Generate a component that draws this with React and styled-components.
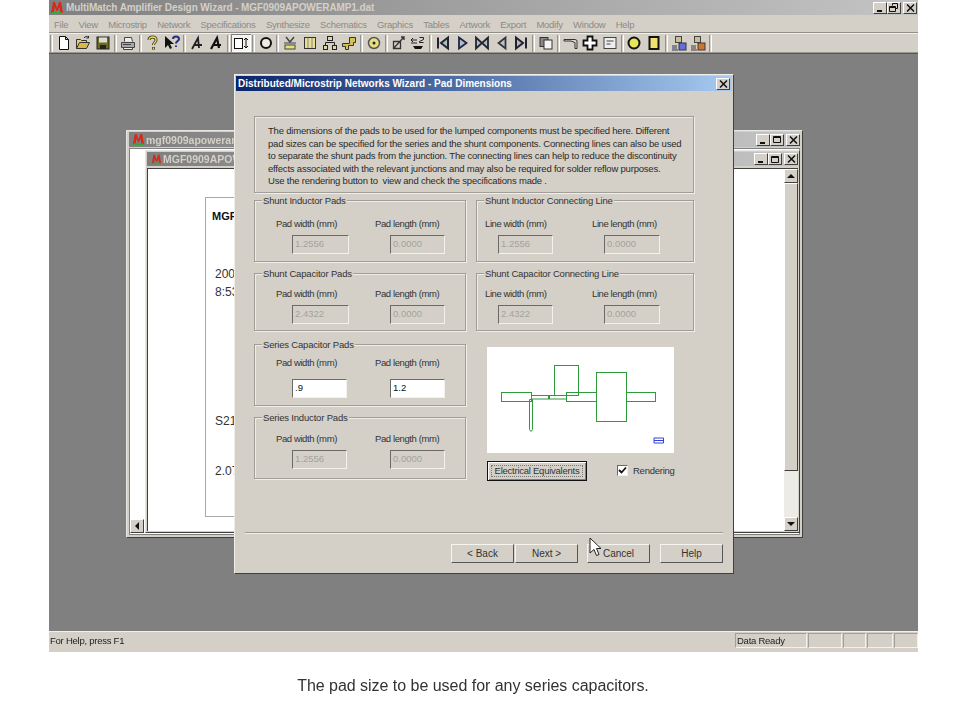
import React from "react";
import styled, { createGlobalStyle } from "styled-components";

const Global = createGlobalStyle`
  html, body { margin: 0; padding: 0; background: #fff; }
  body { font-family: "Liberation Sans", Arial, sans-serif; color: #222; }
  * { box-sizing: border-box; }
`;

const Page = styled.div`
  position: relative;
  width: 960px;
  height: 720px;
  overflow: hidden;
  padding-left: 49px;
  filter: blur(0.3px);
`;

const AppFrame = styled.div`
  width: 869px;
  height: 652px;
  display: flex;
  flex-direction: column;
  background: #d4d0c8;
`;

const TitleBar = styled.div`
  height: ${(p) => p.$h || 15}px;
  flex: none;
  display: flex;
  align-items: center;
  gap: ${(p) => p.$gap || 1}px;
  padding: 0 ${(p) => p.$pr || 0}px 0 ${(p) => p.$pl || 3}px;
  background: ${(p) =>
    p.$active
      ? "linear-gradient(90deg, #0a246a, #a6caf0)"
      : "linear-gradient(90deg, #808080, #c4c4c4)"};
  color: ${(p) => (p.$active ? "#fff" : "#d4d0c8")};
  font-size: ${(p) => p.$fs || 10.5}px;
  font-weight: bold;
  white-space: nowrap;
  overflow: hidden;
`;

const TitleText = styled.span`
  flex: 1;
  letter-spacing: ${(p) => p.$ls || 0}px;
  overflow: hidden;
`;

const CaptionButtons = styled.div`
  display: flex;
  flex: none;
`;

const CaptionBtn = styled.div`
  width: 14px;
  height: 12px;
  margin-left: ${(p) => p.$ml || 0}px;
  background: #d4d0c8;
  border: 1px solid;
  border-color: #fff #404040 #404040 #fff;
  display: flex;
  align-items: center;
  justify-content: center;
  svg { display: block; }
`;

const MenuBar = styled.div`
  height: 18px;
  flex: none;
  display: flex;
  align-items: center;
  padding: 1px 0 0 5px;
  gap: 10.25px;
  font-size: 9.5px;
  letter-spacing: -0.25px;
  color: #8b8a86;
  border-bottom: 1px solid #908e88;
`;

const ToolBar = styled.div`
  height: 20px;
  flex: none;
  display: flex;
  align-items: center;
  border-top: 1px solid #f2f0ea;
  border-bottom: 1px solid #9a9890;
`;

const Grip = styled.div`
  height: 17px;
  border-left: 1px solid #94928c;
  border-right: 1px solid #fff;
  width: 3px;
  flex: none;
  margin: ${(p) => (p.$end ? "0 0 0 1px" : "0 1px")};
`;

const ToolBtn = styled.div`
  width: 19.65px;
  height: 18px;
  flex: none;
  display: flex;
  align-items: center;
  justify-content: center;
  background: ${(p) => (p.$pressed ? "#f4f3ef" : "transparent")};
  box-shadow: ${(p) =>
    p.$pressed ? "inset 1px 1px 0 #808080, inset -1px -1px 0 #fff" : "none"};
`;

const Desktop = styled.div`
  position: relative;
  flex: 1;
  background: #808080;
  border-top: 1px solid #555;
`;

const Window = styled.div`
  position: absolute;
  display: flex;
  flex-direction: column;
  background: #d4d0c8;
  border: 1px solid;
  border-color: #e8e6e0 #404040 #404040 #e8e6e0;
`;

const BackWindow = styled(Window)`
  left: 77px;
  top: 76px;
  width: 677px;
  height: 408px;
  padding: 1px 2px 2px;
`;

const BackClient = styled.div`
  flex: 1;
  background: #fff;
  margin-top: 1px;
  border: 1px solid #808080;
  display: flex;
  align-items: flex-end;
  padding-bottom: 1px;
`;

const ChildWindow = styled(Window)`
  left: 96px;
  top: 96px;
  width: 655px;
  height: 383px;
  padding: 1px;
`;

const ChildClient = styled.div`
  flex: 1;
  display: flex;
  background: #fff;
  margin-top: 2px;
  border: solid #404040;
  border-width: 1px 0 0 1px;
  min-height: 0;
`;

const DocArea = styled.div`
  flex: 1;
  padding: 28px 0 0 57px;
`;

const Paper = styled.div`
  width: 500px;
  height: 320px;
  border: 1px solid #a8a8a8;
  padding: 11px 0 0 6px;
  font-size: 12px;
  color: #333;
`;

const PaperLine = styled.div`
  margin-top: ${(p) => p.$mt || 0}px;
  margin-left: ${(p) => p.$ml ?? 3}px;
  font-weight: ${(p) => (p.$bold ? "bold" : "normal")};
  font-size: ${(p) => (p.$bold ? 11 : 12)}px;
  line-height: 14px;
  color: ${(p) => (p.$bold ? "#111" : "#333")};
`;

const ScrollV = styled.div`
  width: 14px;
  flex: none;
  display: flex;
  flex-direction: column;
  background: #ecebe6;
`;

const ScrollBtn = styled.div`
  width: 14px;
  height: 14px;
  flex: none;
  background: #d4d0c8;
  border: 1px solid;
  border-color: #fff #404040 #404040 #fff;
  display: flex;
  align-items: center;
  justify-content: center;
`;

const ScrollThumb = styled(ScrollBtn)`
  height: 288px;
`;

const ScrollSpace = styled.div`
  flex: 1;
`;

const Dialog = styled.div`
  position: absolute;
  left: 185px;
  top: 20px;
  width: 500px;
  height: 500px;
  background: #d4d0c8;
  border: 1px solid;
  border-color: #efede8 #404040 #404040 #efede8;
  padding: 1px;
  display: flex;
  flex-direction: column;
`;

const DialogBody = styled.div`
  display: grid;
  grid-template-columns: 212px 218px;
  column-gap: 10px;
  padding: 25px 0 0 18px;
`;

const Column = styled.div`
  display: flex;
  flex-direction: column;
`;

const InfoBox = styled.div`
  grid-column: 1 / 3;
  height: 77px;
  margin-bottom: 7px;
  padding: 8px 0 0 13px;
  border: 1px solid #a09e98;
  box-shadow: 1px 1px 0 #f0eee8, inset 1px 1px 0 #eeece6;
  font-size: 9.5px;
  letter-spacing: -0.2px;
  line-height: 12.5px;
  white-space: nowrap;
  color: #2a2a2a;
`;

const Group = styled.div`
  position: relative;
  height: ${(p) => p.$h}px;
  margin-bottom: ${(p) => p.$mb || 0}px;
  padding-top: ${(p) => p.$pt}px;
  padding-left: ${(p) => p.$pl}px;
  border: 1px solid #a09e98;
  box-shadow: 1px 1px 0 #f0eee8, inset 1px 1px 0 #eeece6;
  display: grid;
  grid-template-columns: ${(p) => p.$col}px 1fr;
  align-content: start;
`;

const Legend = styled.div`
  position: absolute;
  left: 7px;
  top: -6px;
  padding: 0 1px;
  background: #d4d0c8;
  font-size: 9.5px;
  letter-spacing: -0.18px;
  line-height: 12px;
  white-space: nowrap;
  color: #333;
`;

const Field = styled.div`
  display: flex;
  flex-direction: column;
  align-items: flex-start;
  gap: ${(p) => p.$gap}px;
`;

const FieldLabel = styled.div`
  font-size: 9.5px;
  letter-spacing: -0.4px;
  line-height: 12px;
  white-space: nowrap;
  color: #333;
`;

const Input = styled.div`
  width: ${(p) => p.$w || 57}px;
  height: 19px;
  margin-left: ${(p) => p.$indent}px;
  padding-left: 2px;
  font-size: 9.5px;
  line-height: 16px;
  background: ${(p) => (p.$on ? "#fff" : "#d4d0c8")};
  color: ${(p) => (p.$on ? "#111" : "#a4a29c")};
  border: 1px solid;
  border-color: #6a6a66 #f4f2ec #f4f2ec #6a6a66;
`;

const PreviewCol = styled.div`
  grid-column: 2;
  padding: 3px 0 0 11px;
  display: flex;
  flex-direction: column;
`;

const Preview = styled.div`
  width: 187px;
  height: 106px;
  background: #fff;
  svg { display: block; }
`;

const PreviewFoot = styled.div`
  display: flex;
  align-items: center;
  margin-top: 8px;
`;

const DefaultButton = styled.div`
  width: 100px;
  height: 20px;
  background: #d4d0c8;
  border: 1px solid #111;
  box-shadow: inset 1px 1px 0 #fff, inset -1px -1px 0 #808080;
  font-size: 9.5px;
  letter-spacing: -0.25px;
  line-height: 17px;
  text-align: center;
  color: #333;
  position: relative;
  &::after {
    content: "";
    position: absolute;
    inset: 3px;
    border: 1px dotted #777;
  }
`;

const Rendering = styled.div`
  display: flex;
  align-items: center;
  gap: 5px;
  margin: -2px 0 0 30px;
  font-size: 9.5px;
  letter-spacing: -0.25px;
  color: #333;
`;

const CheckBox = styled.div`
  width: 11px;
  height: 11px;
  background: #fff;
  border: 1px solid;
  border-color: #666 #eee #eee #666;
  display: flex;
  align-items: center;
  justify-content: center;
`;

const Divider = styled.div`
  height: 2px;
  margin: 51px 9px 0 9px;
  border-top: 1px solid #9a9890;
  border-bottom: 1px solid #f2f0ea;
`;

const ButtonRow = styled.div`
  display: flex;
  padding: 10px 0 0 215px;
`;

const WizButton = styled.div`
  width: ${(p) => p.$w || 63}px;
  height: 19px;
  margin-left: ${(p) => p.$ml || 0}px;
  background: #d4d0c8;
  border: 1px solid;
  border-color: #f6f4ee #555 #555 #f6f4ee;
  font-size: 10px;
  line-height: 17px;
  text-align: center;
  color: #333;
`;

const StatusBar = styled.div`
  height: 21px;
  flex: none;
  display: flex;
  align-items: flex-start;
  padding-top: 1px;
  font-size: 9.5px;
  letter-spacing: -0.25px;
  color: #222;
  border-top: 1px solid #f2f0ea;
`;

const StatusText = styled.div`
  flex: 1;
  padding: 2px 0 0 1px;
  line-height: 12px;
`;

const StatusPanel = styled.div`
  width: ${(p) => p.$w}px;
  height: 15px;
  margin-left: ${(p) => p.$ml || 0}px;
  padding-left: 1px;
  line-height: 13px;
  border: 1px solid;
  border-color: #a09e98 #f4f2ec #f4f2ec #a09e98;
`;

const Caption = styled.div`
  margin-top: 26px;
  margin-left: -1px;
  width: 850px;
  text-align: center;
  font-size: 16px;
  line-height: 16px;
  color: #333;
  letter-spacing: -0.03px;
`;

const Cursor = styled.svg`
  position: absolute;
  left: 589px;
  top: 537px;
`;

const Logo = ({ size = 12 }) => (
  <svg width={size} height={size} viewBox="0 0 14 14" style={{ flex: "none" }}>
    <path d="M1 12 L3 1 L5 1 L7 7 L9 1 L11 1 L13 12 L10 12 L9.4 6 L7.6 10 L6.4 10 L4.6 6 L4 12 Z" fill="#d62a18" />
    <rect x="2" y="11" width="10" height="2" fill="#35a83a" />
  </svg>
);

const Glyph = ({ kind }) => {
  if (kind === "min") return <svg width="8" height="8"><rect x="1" y="6" width="5" height="2" fill="#111" /></svg>;
  if (kind === "max") return <svg width="10" height="9"><path d="M1.500 1.500h7v6h-7zM1 2.500h8" fill="none" stroke="#111" /></svg>;
  if (kind === "restore")
    return (
      <svg width="10" height="9">
        <path d="M3.500 2.500V.5h5v5H6.500M.5 3.500h6v5h-6zM.5 4.500h6" fill="none" stroke="#111" strokeWidth="1" />
      </svg>
    );
  return <svg width="9" height="8"><path d="M1 .5L8 7.500M8 .5L1 7.500" stroke="#111" strokeWidth="1.500" /></svg>;
};

const Caps = ({ restore }) => (
  <CaptionButtons>
    <CaptionBtn><Glyph kind="min" /></CaptionBtn>
    <CaptionBtn><Glyph kind={restore ? "restore" : "max"} /></CaptionBtn>
    <CaptionBtn $ml={2}><Glyph kind="close" /></CaptionBtn>
  </CaptionButtons>
);

const toolIcons = {
  new: <path d="M3.500 1.500h6l3 3v10h-9zM9.500 1.500v3h3" fill="#fff" stroke="#111" />,
  open: (
    <>
      <path d="M1.500 13.500v-9h4l1 1h5v2" fill="#e8d070" stroke="#333" />
      <path d="M1.500 13.500l3-6h10l-3 6z" fill="#d8b850" stroke="#333" />
      <path d="M9 3c1.500-2 3-2 4.500-.5M13.500 1v2h-2" fill="none" stroke="#222" />
    </>
  ),
  save: (
    <>
      <rect x="2" y="2" width="12" height="12" fill="#6c6c20" stroke="#222" />
      <rect x="4" y="2.500" width="8" height="5" fill="#dedcd2" />
      <rect x="5" y="10" width="6" height="4" fill="#222" />
    </>
  ),
  print: (
    <>
      <path d="M4.500 6.500v-4h7l1 4" fill="#eee" stroke="#444" />
      <path d="M1.500 7.500h13v5h-13z" fill="#a8a8a8" stroke="#444" />
      <path d="M3.500 12.500h9v2h-9z" fill="#eee" stroke="#444" />
      <path d="M3 9.500h8" stroke="#444" />
    </>
  ),
  help: (
    <>
      <path d="M5 5c0-4 7-4 7 0 0 2.500-2.500 2.500-2.500 5M9.500 14.500v-2.500" fill="none" stroke="#4a4210" strokeWidth="3" />
      <path d="M5 5c0-4 7-4 7 0 0 2.500-2.500 2.500-2.500 5M9.500 14v-1.500" fill="none" stroke="#e6d860" strokeWidth="1.300" />
    </>
  ),
  what: (
    <>
      <path d="M1 1v12l3-3 2 4 2-1-2-4h4z" fill="#111" />
      <path d="M9 4c0-3.500 6-3.500 6 0 0 2-3 2-3 4.500M12 12v-1.500" fill="none" stroke="#27307c" strokeWidth="2" />
    </>
  ),
  a1: <path d="M3 14L9 3l1 10M5 10h8" fill="none" stroke="#222" strokeWidth="1.800" />,
  a2: <path d="M3 14L9 3l2 10M5 10h8" fill="none" stroke="#111" strokeWidth="2.200" />,
  dim: (
    <>
      <rect x="1.500" y="3.500" width="8" height="10" fill="#fff" stroke="#111" />
      <path d="M13 3v10M11 5l2-2 2 2M11 11l2 2 2-2" fill="none" stroke="#111" />
    </>
  ),
  ring: <circle cx="8" cy="8" r="5" fill="#eeece0" stroke="#111" strokeWidth="2" />,
  cap: (
    <>
      <path d="M4 2l4 5 4-5" fill="none" stroke="#444" strokeWidth="1.500" />
      <path d="M2 8h12" stroke="#444" />
      <rect x="3" y="10" width="10" height="4" fill="#e8e070" stroke="#444" />
    </>
  ),
  bars: (
    <>
      <rect x="2.500" y="2.500" width="11" height="11" fill="#e8e090" stroke="#333" />
      <path d="M6 3v10M10 3v10" stroke="#888" />
    </>
  ),
  tree: (
    <>
      <rect x="5.500" y="1.500" width="5" height="4" fill="#d8d8a0" stroke="#222" />
      <rect x="1.500" y="10.500" width="4" height="4" fill="#d8d8a0" stroke="#222" />
      <rect x="10.500" y="10.500" width="4" height="4" fill="#d8d8a0" stroke="#222" />
      <path d="M3.500 10.500v-3h9v3" fill="none" stroke="#222" />
    </>
  ),
  bend: <path d="M1.500 8.500h7v-6h6v5h-2v3h-5v4h-3v-3h-3z" fill="#d8c050" stroke="#333" />,
  target: (
    <>
      <circle cx="8" cy="8" r="5.500" fill="#e8e080" stroke="#555" strokeWidth="1.500" />
      <circle cx="8" cy="8" r="1.500" fill="#222" />
    </>
  ),
  diag: <path d="M3.500 6.500h7v7h-7zM3 14L14 2M11 2h3v3" fill="none" stroke="#333" strokeWidth="1.300" />,
  swap: (
    <>
      <path d="M1 5h6M1 8h6M3 3l-2 2 2 2" fill="none" stroke="#222" />
      <path d="M3 11h10l-2 3H5z" fill="#111" />
      <path d="M9.500 2.500h4v2l-4 2v1h4" fill="none" stroke="#222" />
    </>
  ),
  first: <path d="M3 2.500v11M13 2.500v11L6 8z" fill="#a8c0b8" stroke="#223" strokeWidth="2" />,
  play: <path d="M5 2.500v11L12.500 8z" fill="#a8c0c8" stroke="#224" strokeWidth="1.800" />,
  both: <path d="M2 2.500v11L8 8zM14 2.500v11L8 8z" fill="#a8c0b8" stroke="#223" strokeWidth="1.800" />,
  back: <path d="M11.500 2.500v11L4.500 8z" fill="#b8c4bc" stroke="#334" strokeWidth="1.800" />,
  last: <path d="M13 2.500v11M3 2.500v11L10 8z" fill="#b8b8b8" stroke="#223" strokeWidth="2" />,
  copy: (
    <>
      <rect x="2" y="2.500" width="8" height="9" fill="#888" stroke="#333" />
      <rect x="6" y="5" width="8" height="9" fill="#f4f4f4" stroke="#333" />
    </>
  ),
  probe: <path d="M1 4.500h11l2 1v8h-2v-6l-4-1.500H1z" fill="#e0e0d0" stroke="#333" />,
  cross: <path d="M5.500 1.500h5v4h4v5h-4v4h-5v-4h-4v-5h4z" fill="#fff" stroke="#111" strokeWidth="1.800" />,
  note: (
    <>
      <rect x="2" y="2.500" width="12" height="11" fill="#eee" stroke="#444" />
      <path d="M4.500 6h7M4.500 9h4" stroke="#444" />
    </>
  ),
  disc: <circle cx="8" cy="8" r="5.500" fill="#e6e65a" stroke="#111" strokeWidth="2" />,
  pad: <rect x="3.500" y="2" width="9" height="12" fill="#f0e070" stroke="#111" strokeWidth="2" />,
  netA: (
    <>
      <rect x="4.500" y="1.500" width="6" height="6" fill="#c8c090" stroke="#444" />
      <path d="M1 11h5M1 13h5M1 15h6" stroke="#335" />
      <rect x="8" y="8" width="7" height="7" fill="#6070d8" stroke="#334" />
    </>
  ),
  netB: (
    <>
      <rect x="4.500" y="1.500" width="6" height="6" fill="#c8c090" stroke="#444" />
      <path d="M1 11h5M1 13h5M1 15h6" stroke="#533" />
      <rect x="8" y="8" width="7" height="7" fill="#c87830" stroke="#433" />
    </>
  ),
};

const toolGroups = [
  ["new", "open", "save"],
  ["print"],
  ["help", "what"],
  ["a1", "a2"],
  ["dim"],
  ["ring"],
  ["cap", "bars", "tree", "bend"],
  ["target"],
  ["diag", "swap"],
  ["first", "play", "both", "back", "last"],
  ["copy"],
  ["probe", "cross", "note"],
  ["disc", "pad"],
  ["netA", "netB"],
];

const menus = [
  "File", "View", "Microstrip", "Network", "Specifications", "Synthesize", "Schematics",
  "Graphics", "Tables", "Artwork", "Export", "Modify", "Window", "Help",
];

const Arrow = ({ dir }) => {
  const points = { up: "1,5 9,5 5,1", down: "1,1 9,1 5,5" };
  if (dir === "left") return <svg width="6" height="10"><polygon points="5,1 5,9 1,5" fill="#111" /></svg>;
  return <svg width="10" height="6"><polygon points={points[dir]} fill="#111" /></svg>;
};

const PadGroup = ({ title, h, mb, pt, pl, col, gap, a, b, labels, on, indentA, indentB, wA, wB }) => (
  <Group $h={h} $mb={mb} $pt={pt} $pl={pl} $col={col}>
    <Legend>{title}</Legend>
    <Field $gap={gap}>
      <FieldLabel>{labels[0]}</FieldLabel>
      <Input $indent={indentA} $on={on} $w={wA}>{a}</Input>
    </Field>
    <Field $gap={gap}>
      <FieldLabel>{labels[1]}</FieldLabel>
      <Input $indent={indentB} $on={on} $w={wB}>{b}</Input>
    </Field>
  </Group>
);

const padLabels = ["Pad width (mm)", "Pad length (mm)"];
const lineLabels = ["Line width (mm)", "Line length (mm)"];

const Layout = () => (
  <svg width="187" height="106" viewBox="0 0 187 106">
    <g fill="none" stroke="#2f9a3c" strokeWidth="1">
      <rect x="14.500" y="45.500" width="30" height="9" />
      <rect x="44.500" y="48.500" width="17" height="3.500" />
      <rect x="62.500" y="48.500" width="17" height="3.500" />
      <path d="M42.500 52.500h3v30l-1.500 2-1.500-2z" />
      <rect x="67.500" y="18.500" width="24" height="30" />
      <rect x="79.500" y="45.500" width="30" height="9" />
      <rect x="109.500" y="25.500" width="30" height="49" />
      <rect x="139.500" y="45.500" width="29" height="9" />
    </g>
    <path d="M167 91h9.500v5H167zM167 93.500h9.500" fill="none" stroke="#3340d8" />
  </svg>
);

export default function App() {
  return (
    <Page>
      <Global />
      <AppFrame>
        <TitleBar $gap={2} $pl={1} $fs={10} $pr={1}>
          <Logo size={14} />
          <TitleText $ls={-0.09}>MultiMatch Amplifier Design Wizard - MGF0909APOWERAMP1.dat</TitleText>
          <Caps restore />
        </TitleBar>
        <MenuBar>
          {menus.map((m) => (
            <span key={m}>{m}</span>
          ))}
        </MenuBar>
        <ToolBar>
          <Grip />
          {toolGroups.map((g, i) => (
            <React.Fragment key={g[0]}>
              {i > 0 && <Grip />}
              {g.map((k) => (
                <ToolBtn key={k} $pressed={k === "dim"}>
                  <svg width="16" height="16" viewBox="0 0 16 16">{toolIcons[k]}</svg>
                </ToolBtn>
              ))}
            </React.Fragment>
          ))}
          <Grip $end />
        </ToolBar>
        <Desktop>
          <BackWindow>
            <TitleBar>
              <Logo size={13} />
              <TitleText>mgf0909apoweramp1</TitleText>
              <Caps />
            </TitleBar>
            <BackClient>
              <ScrollBtn><Arrow dir="left" /></ScrollBtn>
            </BackClient>
          </BackWindow>
          <ChildWindow>
            <TitleBar $h={14} $pl={4}>
              <Logo size={11} />
              <TitleText>MGF0909APOWERAMP1</TitleText>
              <Caps />
            </TitleBar>
            <ChildClient>
              <DocArea>
                <Paper>
                  <PaperLine $bold $ml={0}>MGF0909A</PaperLine>
                  <PaperLine $mt={44}>2003</PaperLine>
                  <PaperLine $mt={4}>8:53</PaperLine>
                  <PaperLine $mt={115}>S21</PaperLine>
                  <PaperLine $mt={36}>2.07</PaperLine>
                </Paper>
              </DocArea>
              <ScrollV>
                <ScrollBtn><Arrow dir="up" /></ScrollBtn>
                <ScrollThumb />
                <ScrollSpace />
                <ScrollBtn><Arrow dir="down" /></ScrollBtn>
              </ScrollV>
            </ChildClient>
          </ChildWindow>
          <Dialog>
            <TitleBar $active $h={15} $pl={2} $fs={10} $pr={2}>
              <TitleText>Distributed/Microstrip Networks Wizard - Pad Dimensions</TitleText>
              <CaptionBtn><Glyph kind="close" /></CaptionBtn>
            </TitleBar>
            <DialogBody>
              <InfoBox>
                The dimensions of the pads to be used for the lumped components must be specified here. Different
                <br />
                pad sizes can be specified for the series and the shunt components. Connecting lines can also be used
                <br />
                to separate the shunt pads from the junction. The connecting lines can help to reduce the discontinuity
                <br />
                effects associated with the relevant junctions and may also be required for solder reflow purposes.
                <br />
                Use the rendering button to &nbsp;view and check the specifications made .
              </InfoBox>
              <Column>
                <PadGroup title="Shunt Inductor Pads" h={62} mb={11} pt={17} pl={21} col={99} gap={5} labels={padLabels} a="1.2556" b="0.0000" indentA={16} indentB={15} wB={55} />
                <PadGroup title="Shunt Capacitor Pads" h={58} mb={13} pt={14} pl={21} col={99} gap={5} labels={padLabels} a="2.4322" b="0.0000" indentA={16} indentB={15} wB={55} />
                <PadGroup title="Series Capacitor Pads" h={62} mb={11} pt={12} pl={21} col={99} gap={10} labels={padLabels} a=".9" b="1.2" on indentA={16} indentB={15} wA={55} wB={55} />
                <PadGroup title="Series Inductor Pads" h={62} pt={15} pl={21} col={99} gap={5} labels={padLabels} a="1.2556" b="0.0000" indentA={16} indentB={15} wA={55} wB={55} />
              </Column>
              <Column>
                <PadGroup title="Shunt Inductor Connecting Line" h={62} mb={11} pt={17} pl={8} col={107} gap={5} labels={lineLabels} a="1.2556" b="0.0000" indentA={13} indentB={12} wA={55} wB={56} />
                <PadGroup title="Shunt Capacitor Connecting Line" h={58} mb={13} pt={14} pl={8} col={107} gap={5} labels={lineLabels} a="2.4322" b="0.0000" indentA={13} indentB={12} wA={55} wB={56} />
                <PreviewCol>
                  <Preview><Layout /></Preview>
                  <PreviewFoot>
                    <DefaultButton>Electrical Equivalents</DefaultButton>
                    <Rendering>
                      <CheckBox>
                        <svg width="9" height="9"><path d="M1 4l2.500 2.500L8 1.500" fill="none" stroke="#111" strokeWidth="1.800" /></svg>
                      </CheckBox>
                      Rendering
                    </Rendering>
                  </PreviewFoot>
                </PreviewCol>
              </Column>
            </DialogBody>
            <Divider />
            <ButtonRow>
              <WizButton $w={63}>&lt; Back</WizButton>
              <WizButton $w={63} $ml={1}>Next &gt;</WizButton>
              <WizButton $w={63} $ml={9}>Cancel</WizButton>
              <WizButton $w={63} $ml={10}>Help</WizButton>
            </ButtonRow>
          </Dialog>
        </Desktop>
        <StatusBar>
          <StatusText>For Help, press F1</StatusText>
          <StatusPanel $w={72}>Data Ready</StatusPanel>
          <StatusPanel $w={34} $ml={1} />
          <StatusPanel $w={23} $ml={1} />
          <StatusPanel $w={26} $ml={1} />
          <StatusPanel $w={24} $ml={1} />
        </StatusBar>
      </AppFrame>
      <Caption>The pad size to be used for any series capacitors.</Caption>
      <Cursor width="14" height="20" viewBox="0 0 14 20">
        <path d="M1 1v15l4-3.500 2.500 6 2.500-1-2.500-6H12z" fill="#fff" stroke="#222" />
      </Cursor>
    </Page>
  );
}
